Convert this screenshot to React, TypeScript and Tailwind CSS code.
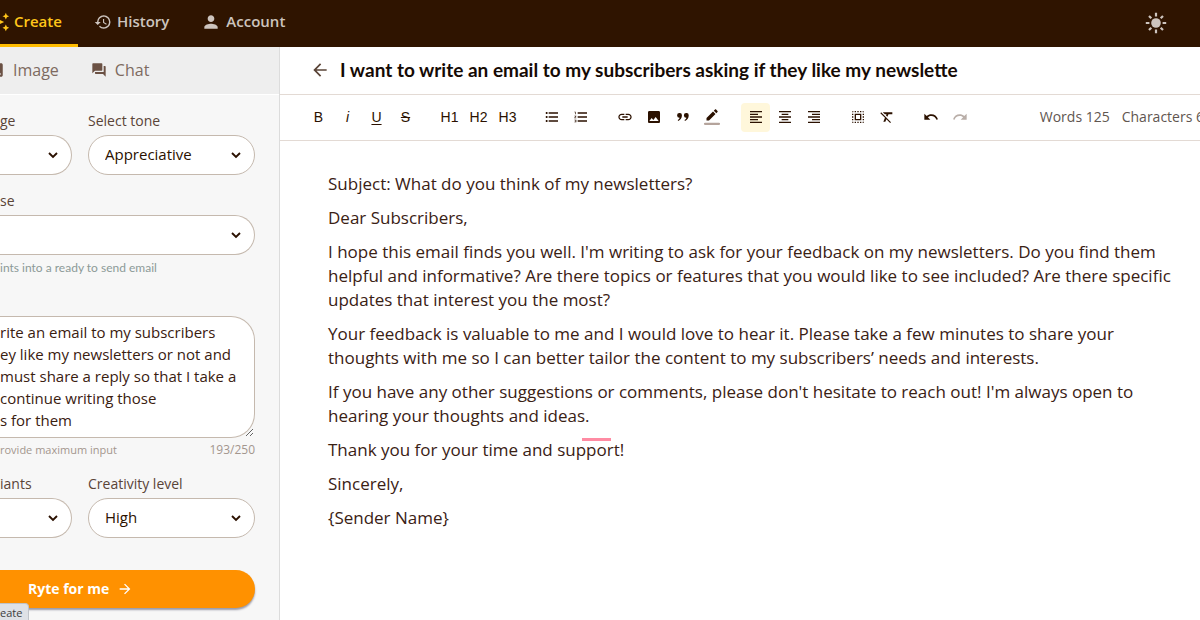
import type { ReactNode } from "react";
import {
  MdArrowBack,
  MdArrowForward,
  MdAutoAwesome,
  MdForum,
  MdFormatAlignCenter,
  MdFormatAlignLeft,
  MdFormatAlignRight,
  MdFormatClear,
  MdFormatListBulleted,
  MdFormatListNumbered,
  MdHistory,
  MdImage,
  MdLink,
  MdPerson,
  MdRedo,
  MdSelectAll,
  MdUndo,
} from "react-icons/md";

function SunIcon() {
  return (
    <svg viewBox="0 0 22 22" className="size-[22px]" aria-hidden="true">
      <circle cx="11" cy="11" r="4.8" fill="currentColor" />
      <path
        d="M11 .8v3.6M11 17.6v3.6M.8 11h3.6M17.6 11h3.6M4 4l2.3 2.3M15.7 15.7L18 18M18 4l-2.3 2.3M6.3 15.7L4 18"
        stroke="currentColor"
        strokeWidth="2.2"
      />
    </svg>
  );
}

function QuoteIcon() {
  return (
    <svg viewBox="0 0 12 8" className="h-2 w-3" fill="currentColor" aria-hidden="true">
      <path d="M2.4 0a2.4 2.4 0 0 1 2.5 2.6C4.9 5 3.6 7 1.2 7.9L.7 6.9C1.9 6.3 2.5 5.6 2.6 4.8A2.4 2.4 0 1 1 2.4 0zM9.2 0a2.4 2.4 0 0 1 2.5 2.6c0 2.4-1.3 4.4-3.7 5.3l-.5-1c1.2-.6 1.8-1.3 1.9-2.1A2.4 2.4 0 1 1 9.2 0z" />
    </svg>
  );
}

function Chevron() {
  return (
    <svg viewBox="0 0 10 7" className="pointer-events-none absolute top-[17px] right-[14px] h-[7px] w-[10px]" aria-hidden="true">
      <path d="M1 1l4 4 4-4" fill="none" stroke="#2b1100" strokeWidth="1.9" />
    </svg>
  );
}

function Field({ id, label, value, open = false }: { id: string; label: string; value: string; open?: boolean }) {
  return (
    <div className="min-w-0">
      <label htmlFor={id} className="block h-7 leading-7">
        {label}
      </label>
      <div className="relative">
        <select
          id={id}
          defaultValue={value}
          className={
            open
              ? "h-10 w-full appearance-none rounded-r-full border border-l-0 border-[#c5b9ae] bg-white px-4 text-[15px] text-[#2b1100]"
              : "h-10 w-full appearance-none rounded-full border border-[#c5b9ae] bg-white px-4 text-[15px] text-[#2b1100]"
          }
        >
          <option value={value}>{value}</option>
        </select>
        <Chevron />
      </div>
    </div>
  );
}

function Tool({ label, active = false, muted = false, children }: { label: string; active?: boolean; muted?: boolean; children: ReactNode }) {
  return (
    <button
      type="button"
      aria-label={label}
      className={
        active
          ? "flex size-[29px] items-center justify-center rounded bg-[#fff7db]"
          : muted
            ? "flex size-[29px] items-center justify-center rounded text-[#b9aea8]"
            : "flex size-[29px] items-center justify-center rounded"
      }
    >
      {children}
    </button>
  );
}

function Header() {
  return (
    <header className="flex h-[47px] items-stretch bg-[#2f1400] font-semibold text-[#cdc4be]">
      <nav className="flex flex-1 text-[15px]">
        <a href="#create" className="flex w-[78px] items-center border-b-[3px] border-[#ffbc00] pt-[3px] pb-1 text-[#ffc61a]">
          <MdAutoAwesome className="-ml-[10px] size-5 shrink-0" />
          <span className="ml-1">Create</span>
        </a>
        <a href="#history" className="ml-4 flex items-center gap-[5px] pb-1">
          <MdHistory className="size-[18px]" />
          History
        </a>
        <a href="#account" className="ml-8 flex items-center gap-[5px] pb-1">
          <MdPerson className="size-5" />
          Account
        </a>
      </nav>
      <button type="button" aria-label="Light mode" className="mr-[33px] flex items-center pb-0.5">
        <SunIcon />
      </button>
    </header>
  );
}

function Sidebar() {
  return (
    <aside className="w-[280px] shrink-0 overflow-hidden border-r border-[#dcdcdc] bg-[#f7f7f7] text-sm text-[#5a4437]">
      <nav className="flex h-12 items-center border-b border-white bg-[#eeeeee] pb-0.5 text-base text-[#7d6a60]">
        <a href="#image" className="flex items-center">
          <MdImage className="-ml-[13px] size-[18px] text-[#6b5144]" />
          <span className="ml-2">Image</span>
        </a>
        <a href="#chat" className="ml-8 flex items-center gap-2">
          <MdForum className="size-4 text-[#6b5144]" />
          Chat
        </a>
      </nav>
      <form className="pt-3 pr-6">
        <div className="grid grid-cols-[72px_1fr] gap-x-4">
          <Field id="language" label="ge" value="" open />
          <Field id="tone" label="Select tone" value="Appreciative" />
        </div>
        <div className="mt-3">
          <Field id="use-case" label="se" value="" open />
        </div>
        <p className="mt-1 font-['Lato',sans-serif] text-xs leading-[18px] text-[#8c9a98]">ints into a ready to send email</p>
        <textarea
          aria-label="Email brief"
          defaultValue={"rite an email to my subscribers\ney like my newsletters or not and\nmust share a reply so that I take a\ncontinue writing those\ns for them"}
          className="mt-[39px] block h-[122px] w-full resize overflow-hidden rounded-r-3xl border border-l-0 border-[#c5b9ae] bg-white py-1 whitespace-pre text-[15px] leading-[22px] text-[#3a2010]"
        />
        <div className="mt-1 flex justify-between text-[11px] leading-4 text-[#a3968e]">
          <span>rovide maximum input</span>
          <span className="text-xs leading-4">193/250</span>
        </div>
        <div className="mt-3 grid grid-cols-[72px_1fr] gap-x-4">
          <Field id="variants" label="iants" value="" open />
          <Field id="creativity" label="Creativity level" value="High" />
        </div>
        <button
          type="button"
          className="mt-8 flex h-[38px] w-full items-center gap-2 rounded-r-full bg-[#ff9100] pl-7 text-sm font-bold text-white shadow-[0_2px_2px_#9a9aa8]"
        >
          Ryte for me
          <MdArrowForward className="size-4" />
        </button>
      </form>
    </aside>
  );
}

function Toolbar() {
  return (
    <div className="flex h-[46px] items-center overflow-hidden border-b border-[#e3dad4] pb-px pl-6 text-[#2b1100]">
      <div className="flex shrink-0 items-center gap-[15px]">
        <div className="flex font-['Liberation_Sans',sans-serif] text-sm">
          <Tool label="Bold">B</Tool>
          <Tool label="Italic"><i>i</i></Tool>
          <Tool label="Underline"><span className="underline underline-offset-2">U</span></Tool>
          <Tool label="Strikethrough"><s>S</s></Tool>
        </div>
        <div className="flex font-['Liberation_Sans',sans-serif] text-sm">
          <Tool label="Heading 1">H1</Tool>
          <Tool label="Heading 2">H2</Tool>
          <Tool label="Heading 3">H3</Tool>
        </div>
        <div className="flex">
          <Tool label="Bulleted list"><MdFormatListBulleted className="size-4" /></Tool>
          <Tool label="Numbered list"><MdFormatListNumbered className="size-4" /></Tool>
        </div>
        <div className="flex">
          <Tool label="Link"><MdLink className="size-4" /></Tool>
          <Tool label="Insert image"><MdImage className="size-4" /></Tool>
          <Tool label="Quote"><QuoteIcon /></Tool>
          <Tool label="Highlight">
            <svg viewBox="0 0 16 16" className="size-4" aria-hidden="true">
              <path d="M2.5 11.5V9L9 2.5 11.5 5 5 11.5zM9.8 1.7L11 .5c.3-.3.8-.3 1.1 0l1.4 1.4c.3.3.3.8 0 1.1l-1.2 1.2z" fill="currentColor" />
              <path d="M1 14.8h14" stroke="#b5a49c" strokeWidth="2.2" strokeLinecap="round" />
            </svg>
          </Tool>
        </div>
        <div className="flex">
          <Tool label="Align left" active><MdFormatAlignLeft className="size-4" /></Tool>
          <Tool label="Align center"><MdFormatAlignCenter className="size-4" /></Tool>
          <Tool label="Align right"><MdFormatAlignRight className="size-4" /></Tool>
        </div>
        <div className="flex">
          <Tool label="Select all"><MdSelectAll className="size-4" /></Tool>
          <Tool label="Clear formatting"><MdFormatClear className="size-4" /></Tool>
        </div>
        <div className="flex">
          <Tool label="Undo"><MdUndo className="size-4" /></Tool>
          <Tool label="Redo" muted><MdRedo className="size-4" /></Tool>
        </div>
      </div>
      <div className="-mr-1 ml-auto flex shrink-0 gap-3 text-sm text-[#5f5650]">
        <span>Words 125</span>
        <span>Characters 6</span>
      </div>
    </div>
  );
}

export default function App() {
  return (
    <div className="relative flex h-screen flex-col overflow-hidden bg-white font-['Open_Sans',sans-serif]">
      <Header />
      <div className="flex min-h-0 flex-1">
        <Sidebar />
        <main className="min-w-0 flex-1">
          <div className="flex h-12 items-center border-b border-[#e3dad4] pb-px pl-[30px]">
            <button type="button" aria-label="Back" className="text-[#5a4437]">
              <MdArrowBack className="size-5" />
            </button>
            <h1 className="ml-[10px] font-['Lato',sans-serif] text-[19px] leading-6 font-bold text-[#150a04]">
              I want to write an email to my subscribers asking if they like my newslette
            </h1>
          </div>
          <Toolbar />
          <article className="flex flex-col gap-[10px] pt-[31px] pr-6 pl-12 text-[17px] leading-6 text-[#3a2114]">
            <p>Subject: What do you think of my newsletters?</p>
            <p>Dear Subscribers,</p>
            <p>
              I hope this email finds you well. I'm writing to ask for your feedback on my newsletters. Do you find them
              helpful and informative? Are there topics or features that you would like to see included? Are there specific
              updates that interest you the most?
            </p>
            <p>
              Your feedback is valuable to me and I would love to hear it. Please take a few minutes to share your
              thoughts with me so I can better tailor the content to my subscribers’ needs and interests.
            </p>
            <p>
              If you have any other suggestions or comments, please don't hesitate to reach out! I'm always open to
              hearing your thoughts and ideas.
            </p>
            <p>
              Thank you for your time and sup
              <span className="relative">
                port
                <span className="absolute top-0 -left-1 h-[3px] w-[29px] bg-[#ff8ba3]" />
              </span>
              !
            </p>
            <p>Sincerely,</p>
            <p>{"{Sender Name}"}</p>
          </article>
        </main>
      </div>
      <div className="absolute bottom-0 left-0 h-[17px] w-[29px] rounded-tr border-t border-r border-[#bfc3c9] bg-[#dee1e6] text-[11px] leading-[18px] text-[#3c3c3c]">
        eate
      </div>
    </div>
  );
}
